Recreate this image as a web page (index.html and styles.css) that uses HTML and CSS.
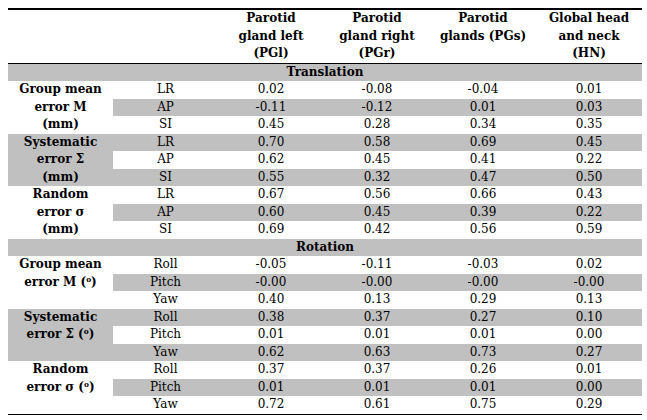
FILE: index.html
```html
<!DOCTYPE html>
<html>
<head>
<meta charset="utf-8">
<link rel="stylesheet" href="styles.css">
</head>
<body>
<table class="tbl">
  <colgroup>
    <col class="c-label"><col class="c-sub"><col class="c-data"><col class="c-data"><col class="c-data"><col class="c-data">
  </colgroup>
  <thead>
    <tr>
      <th></th><th></th>
      <th>Parotid<br>gland left<br>(PGl)</th>
      <th>Parotid<br>gland right<br>(PGr)</th>
      <th>Parotid<br>glands (PGs)</th>
      <th>Global head<br>and neck<br>(HN)</th>
    </tr>
  </thead>
  <tbody>
    <tr class="section"><td colspan="6">Translation</td></tr>
    <tr><td class="lbl" rowspan="3">Group mean<br>error M<br>(mm)</td><td>LR</td><td>0.02</td><td>-0.08</td><td>-0.04</td><td>0.01</td></tr>
    <tr class="g"><td>AP</td><td>-0.11</td><td>-0.12</td><td>0.01</td><td>0.03</td></tr>
    <tr><td>SI</td><td>0.45</td><td>0.28</td><td>0.34</td><td>0.35</td></tr>
    <tr class="g"><td class="lbl g" rowspan="3">Systematic<br>error Σ<br>(mm)</td><td>LR</td><td>0.70</td><td>0.58</td><td>0.69</td><td>0.45</td></tr>
    <tr><td>AP</td><td>0.62</td><td>0.45</td><td>0.41</td><td>0.22</td></tr>
    <tr class="g"><td>SI</td><td>0.55</td><td>0.32</td><td>0.47</td><td>0.50</td></tr>
    <tr><td class="lbl" rowspan="3">Random<br>error σ<br>(mm)</td><td>LR</td><td>0.67</td><td>0.56</td><td>0.66</td><td>0.43</td></tr>
    <tr class="g"><td>AP</td><td>0.60</td><td>0.45</td><td>0.39</td><td>0.22</td></tr>
    <tr><td>SI</td><td>0.69</td><td>0.42</td><td>0.56</td><td>0.59</td></tr>
    <tr class="section"><td colspan="6">Rotation</td></tr>
    <tr><td class="lbl" rowspan="3">Group mean<br>error M (<span class="deg">o</span>)</td><td>Roll</td><td>-0.05</td><td>-0.11</td><td>-0.03</td><td>0.02</td></tr>
    <tr class="g"><td>Pitch</td><td>-0.00</td><td>-0.00</td><td>-0.00</td><td>-0.00</td></tr>
    <tr><td>Yaw</td><td>0.40</td><td>0.13</td><td>0.29</td><td>0.13</td></tr>
    <tr class="g"><td class="lbl g" rowspan="3">Systematic<br>error Σ (<span class="deg">o</span>)</td><td>Roll</td><td>0.38</td><td>0.37</td><td>0.27</td><td>0.10</td></tr>
    <tr><td>Pitch</td><td>0.01</td><td>0.01</td><td>0.01</td><td>0.00</td></tr>
    <tr class="g"><td>Yaw</td><td>0.62</td><td>0.63</td><td>0.73</td><td>0.27</td></tr>
    <tr><td class="lbl" rowspan="3">Random<br>error σ (<span class="deg">o</span>)</td><td>Roll</td><td>0.37</td><td>0.37</td><td>0.26</td><td>0.01</td></tr>
    <tr class="g"><td>Pitch</td><td>0.01</td><td>0.01</td><td>0.01</td><td>0.00</td></tr>
    <tr><td>Yaw</td><td>0.72</td><td>0.61</td><td>0.75</td><td>0.29</td></tr>
  </tbody>
</table>
</body>
</html>
```
FILE: styles.css
```css
html, body {
  margin: 0;
  padding: 0;
  background: #ffffff;
}
body {
  padding: 8px;
  font-family: "DejaVu Serif", "Liberation Serif", serif;
  font-size: 12px;
  color: #000;
}
.tbl {
  width: 634px;
  table-layout: fixed;
  border-collapse: separate;
  border-spacing: 0;
  border-top: 2px solid #000;
  border-bottom: 1.5px solid #000;
}
.c-label { width: 105px; }
.c-sub { width: 105px; }
.c-data { width: 106px; }
.tbl th,
.tbl td {
  padding: 0;
  line-height: 17.5px;
  height: 17.5px;
  text-align: center;
  vertical-align: top;
  white-space: nowrap;
}
.tbl th {
  font-weight: bold;
  border-bottom: 1px solid #000;
}
.tbl .section td {
  background: #c0c0c0;
  font-weight: bold;
}
.tbl tr.g td {
  background: #c0c0c0;
}
.tbl td.lbl {
  font-weight: bold;
  background: #ffffff;
}
.tbl tr td.lbl.g,
.tbl td.lbl.g {
  background: #c0c0c0;
}
.deg {
  font-size: 0.62em;
  line-height: 0;
  vertical-align: 0.5em;
}
```
